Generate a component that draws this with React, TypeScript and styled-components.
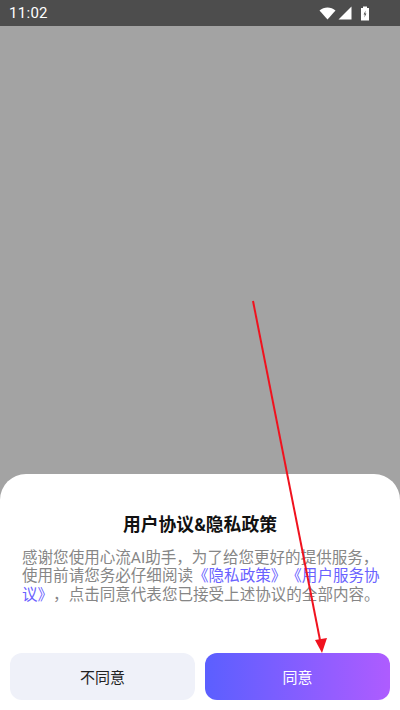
import styled, { createGlobalStyle } from "styled-components";

const GlobalStyle = createGlobalStyle`
  html, body {
    margin: 0;
    padding: 0;
  }
  body {
    font-family: "Roboto", "Noto Sans CJK SC", sans-serif;
  }
`;

const App = () => {
  return (
    <>
      <GlobalStyle />
      <Screen>
        <StatusBar>
          <Clock>11:02</Clock>
          <StatusIcons>
            <svg width="17" height="13" viewBox="0 0 17 13">
              <path d="M0.5 3.6 C5 -0.6 12 -0.6 16.5 3.6 L8.5 12.5 Z" fill="#fff" />
            </svg>
            <svg width="14" height="14" viewBox="0 0 14 14">
              <path d="M13.5 0.5 V13.5 H0.5 Z" fill="#fff" />
            </svg>
            <BatterySlot>
              <svg width="10" height="15" viewBox="0 0 10 15">
                <path d="M3 0.5 H7 V2 H9 V14.5 H1 V2 H3 Z" fill="#fff" />
                <path d="M5.6 4.5 L3.6 8.6 H4.8 L4.4 11.5 L6.4 7.4 H5.2 Z" fill="#4d4d4d" />
              </svg>
            </BatterySlot>
          </StatusIcons>
        </StatusBar>
        <Backdrop />
        <Sheet>
          <Title>用户协议&amp;隐私政策</Title>
          <Body>
            感谢您使用心流AI助手，为了给您更好的提供服务，使用前请您务必仔细阅读
            <Link>《隐私政策》《用户服务协议》</Link>
            ，点击同意代表您已接受上述协议的全部内容。
          </Body>
          <Actions>
            <DeclineButton>不同意</DeclineButton>
            <AgreeButton>同意</AgreeButton>
          </Actions>
        </Sheet>
        <Arrow width="400" height="710" viewBox="0 0 400 710">
          <line x1="253" y1="301" x2="320" y2="640" stroke="#f0121e" strokeWidth="2" />
          <path d="M322 653 L315 640 L327 638 Z" fill="#f0121e" />
        </Arrow>
      </Screen>
    </>
  );
};

const Screen = styled.div`
  position: relative;
  display: flex;
  flex-direction: column;
  width: 400px;
  height: 710px;
  overflow: hidden;
  background: #a3a3a3;
`;

const StatusBar = styled.div`
  flex-shrink: 0;
  display: flex;
  align-items: center;
  justify-content: space-between;
  height: 26px;
  padding: 0 30px 0 9px;
  background: #4d4d4d;
  color: #fff;
`;

const Clock = styled.span`
  font-size: 15px;
  letter-spacing: 0.3px;
`;

const StatusIcons = styled.div`
  display: flex;
  align-items: center;
  gap: 2px;
`;

const BatterySlot = styled.div`
  display: flex;
  margin-left: 6px;
`;

const Backdrop = styled.div`
  flex: 1;
  background: #a3a3a3;
`;

const Sheet = styled.div`
  flex-shrink: 0;
  height: 236px;
  box-sizing: border-box;
  display: flex;
  flex-direction: column;
  padding-top: 41px;
  background: #fff;
  border-radius: 26px 26px 0 0;
`;

const Title = styled.h2`
  margin: 0;
  font-size: 17.8px;
  line-height: 20px;
  font-weight: 700;
  text-align: center;
  color: #111;
`;

const Body = styled.p`
  margin: 14px 0 0;
  padding: 0 18px 0 22px;
  font-size: 15.55px;
  line-height: 18.4px;
  color: #868686;
  text-spacing-trim: space-all;
  font-feature-settings: "palt" 0, "chws" 0;
`;

const Link = styled.span`
  color: #6a62ff;
`;

const Actions = styled.div`
  display: flex;
  gap: 10px;
  margin-top: auto;
  padding: 0 10px 10px;
`;

const ActionButton = styled.button`
  flex: 1;
  height: 47px;
  border: 0;
  border-radius: 12px;
  padding-bottom: 2px;
  font-family: inherit;
  font-size: 15px;
`;

const DeclineButton = styled(ActionButton)`
  background: #eff1f9;
  color: #222;
`;

const AgreeButton = styled(ActionButton)`
  background: linear-gradient(90deg, #5b5fff, #ae5cff);
  color: #fff;
`;

const Arrow = styled.svg`
  position: absolute;
  top: 0;
  left: 0;
  pointer-events: none;
`;

export default App;
